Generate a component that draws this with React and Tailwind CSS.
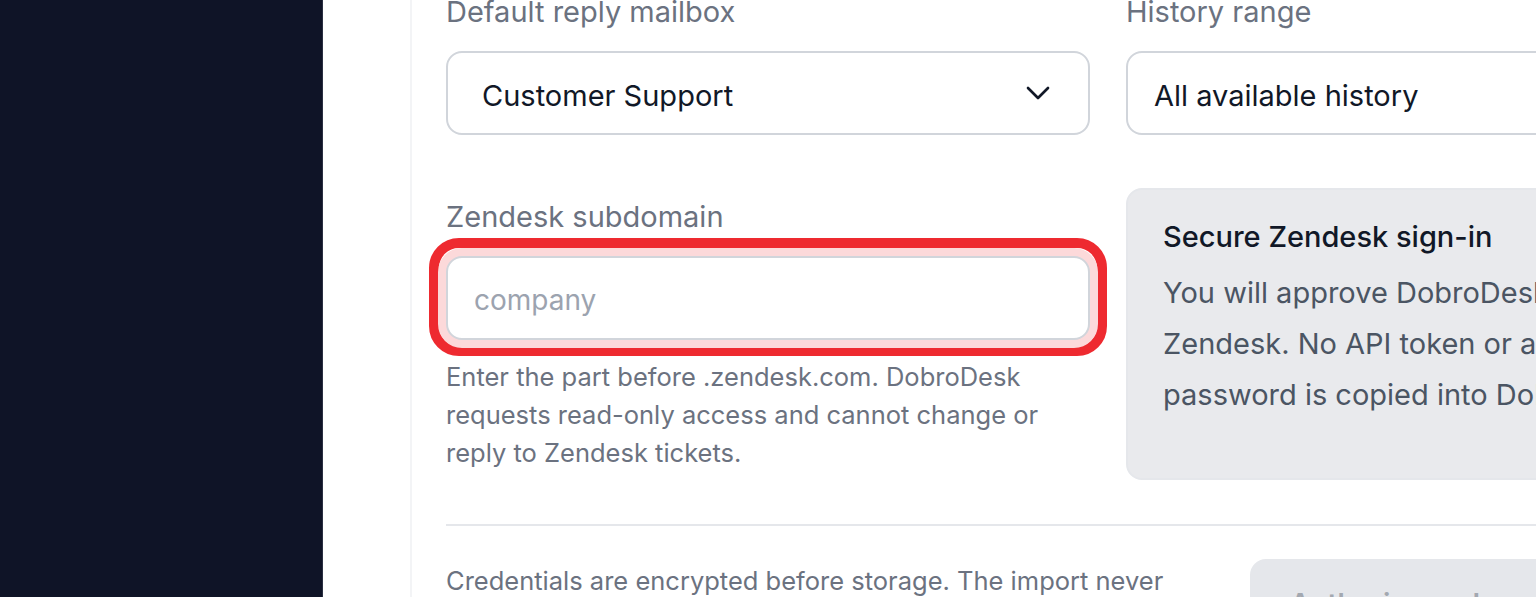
import { ChevronDown } from 'lucide-react';

const Label = ({ children }) => (
  <div className="mt-[9px] mb-[19px] text-[29px] leading-[40px] text-[#6b7280]">{children}</div>
);

export default function App() {
  return (
    <div
      className="flex w-[1536px] h-[597px] overflow-hidden bg-white"
      style={{ fontFamily: 'Inter, "Noto Sans", sans-serif' }}
    >
      {/* Sidebar */}
      <aside className="w-[323px] shrink-0 bg-[#0f1427] border-r border-[#2a3042]" />

      {/* Main */}
      <main className="flex-1 pl-[87px]">
        <div className="w-[1400px] h-[700px] border-l-2 border-[#f3f4f6] pl-[34px] -mt-[17px]">
          {/* Row 1 */}
          <div className="grid grid-cols-[644px_644px] gap-x-[36px]">
            <div>
              <Label>Default reply mailbox</Label>
              <div className="flex h-[84px] items-center justify-between rounded-[16px] border-2 border-[#d1d5db] pl-[34px] pr-[30px]">
                <span className="pt-[5px] text-[29px] text-[#111827]">Customer Support</span>
                <ChevronDown size={40} strokeWidth={1.6} className="text-[#111827]" />
              </div>
            </div>
            <div>
              <Label>History range</Label>
              <div className="flex h-[84px] items-center rounded-[16px] border-2 border-[#d1d5db] pl-[26px]">
                <span className="pt-[5px] text-[29px] text-[#111827]">All available history</span>
              </div>
            </div>
          </div>

          {/* Row 2 */}
          <div className="mt-[53px] grid grid-cols-[644px_644px] gap-x-[36px]">
            <div className="pb-[8px]">
              <Label>Zendesk subdomain</Label>
              <div className="relative">
                <div className="absolute -inset-x-[17px] -top-[18px] -bottom-[16px] rounded-[30px] border-[10px] border-[#ee2a30]" />
                <input
                  placeholder="company"
                  className="relative block h-[84px] w-full rounded-[16px] border-2 border-[#d1d5db] bg-white px-[26px] pt-[4px] text-[28px] text-[#111827] placeholder:text-[#9ca3af] outline-none shadow-[0_0_0_8px_#fcd9da]"
                />
              </div>
              <p className="mt-[18px] text-[25.5px] leading-[38px] text-[#6b7280]">
                Enter the part before .zendesk.com. DobroDesk requests read-only access and cannot change or reply to Zendesk tickets.
              </p>
            </div>
            <div className="rounded-[16px] border-2 border-[#e5e7eb] bg-[#e9eaed] pl-[35px] pt-[27px]">
              <div className="text-[29px] leading-[40px] font-medium text-[#111827]">Secure Zendesk sign-in</div>
              <p className="mt-[10px] w-[580px] text-[29px] leading-[51px] text-[#4b5563]">
                You will approve DobroDesk access in Zendesk. No API token or admin password is copied into DobroDesk.
              </p>
            </div>
          </div>

          {/* Divider */}
          <div className="mt-[44px] h-[2px] bg-[#e5e7eb]" />

          {/* Footer */}
          <div className="mt-[36px] flex items-start">
            <p className="w-[768px] text-[25.5px] leading-[38px] text-[#6b7280]">
              Credentials are encrypted before storage. The import never changes tickets in Zendesk.
            </p>
            <button className="ml-[36px] -mt-[3px] flex h-[90px] items-start rounded-[16px] bg-[#e5e7eb] px-[40px] pt-[24px] text-[28px] font-semibold text-[#a3a8b0]">
              Authorize and continue
            </button>
          </div>
        </div>
      </main>
    </div>
  );
}
